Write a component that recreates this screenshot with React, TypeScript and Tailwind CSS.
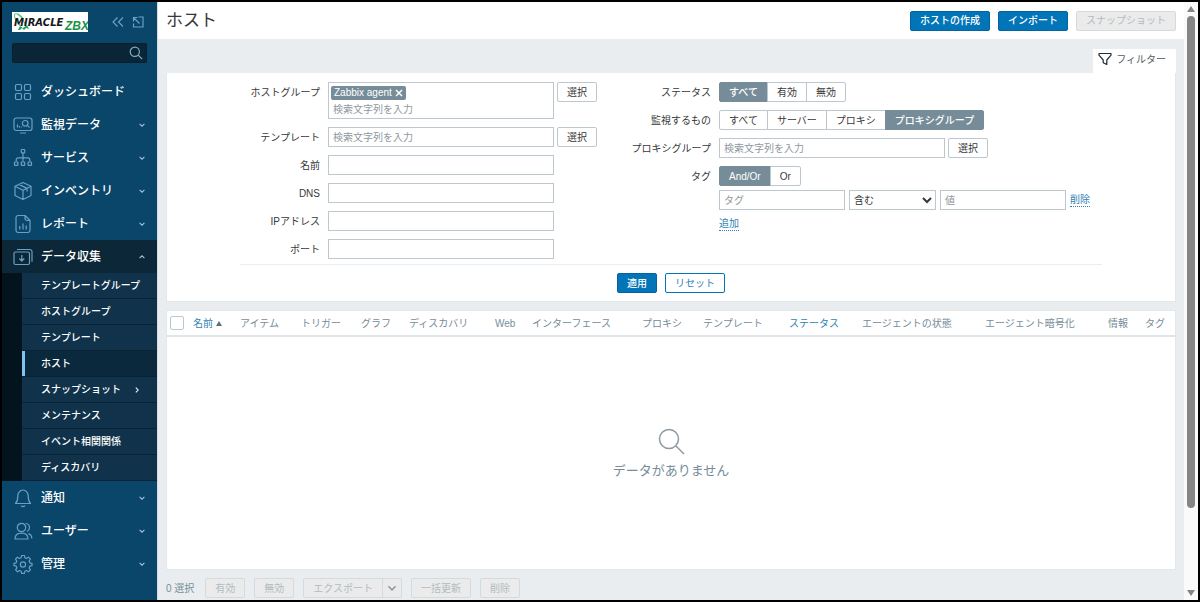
import { useState } from "react";
import type { ReactNode } from "react";
import clsx from "clsx";

interface MenuItem {
  label: string;
  icon: ReactNode;
  plain?: boolean;
}

const ICONS = {
  dashboard: (
    <>
      <rect x="2.5" y="2.5" width="6" height="6" rx="1.2" />
      <rect x="11.5" y="2.5" width="6" height="6" rx="1.2" />
      <rect x="2.5" y="11.5" width="6" height="6" rx="1.2" />
      <rect x="11.5" y="11.5" width="6" height="6" rx="1.2" />
    </>
  ),
  monitoring: (
    <>
      <rect x="1" y="3" width="18" height="12.5" rx="2.2" />
      <path d="M7 18h6M4.5 12.5v-3M6.5 12.5v-1.5M8.5 12.5v-.8" />
      <circle cx="12.2" cy="8.3" r="2.8" />
      <path d="m14.3 10.4 2.3 2.3" />
    </>
  ),
  services: (
    <>
      <rect x="8.3" y="1.5" width="3.4" height="3.4" rx=".6" />
      <path d="M10 5v8.5M3.2 13.5v-1.7a2 2 0 0 1 2-2h9.6a2 2 0 0 1 2 2v1.7" />
      <rect x="1.5" y="14" width="3.4" height="3.4" rx=".6" />
      <rect x="8.3" y="14" width="3.4" height="3.4" rx=".6" />
      <rect x="15.1" y="14" width="3.4" height="3.4" rx=".6" />
    </>
  ),
  inventory: (
    <>
      <path d="M10 1.5 18 5.3v9.2l-8 4-8-4V5.3zM2 5.3l8 4 8-4M10 9.3v9.2M6 3.4l8 4v3.2" />
    </>
  ),
  reports: (
    <>
      <path d="M12 1.5H5.2A2.2 2.2 0 0 0 3 3.7v12.6a2.2 2.2 0 0 0 2.2 2.2h9.6a2.2 2.2 0 0 0 2.2-2.2V6.5zM12 1.5v3a2 2 0 0 0 2 2h3" />
      <path d="M6.8 15.5V12M10 15.5v-6M13.2 15.5v-4" />
    </>
  ),
  collection: (
    <>
      <rect x="1" y="5" width="15.5" height="12.5" rx="1.5" />
      <path d="M4 2.5h12.8a2.2 2.2 0 0 1 2.2 2.2v10M8.8 8v6M6.3 11.5 8.8 14l2.5-2.5" />
    </>
  ),
  alerts: (
    <>
      <path d="M2.5 15.5c1.8-1.8 2.3-3.5 2.3-7.2C4.8 4.8 7 2 10 2s5.2 2.8 5.2 6.3c0 3.7.5 5.4 2.3 7.2zM8 17.8c1.2.9 2.8.9 4 0" />
    </>
  ),
  users: (
    <>
      <circle cx="8.5" cy="6.5" r="4.2" />
      <path d="M2 18c0-4 2.5-5.8 6.5-5.8S15 14 15 18zM12.5 2.5c2.5.3 4 1.9 4 4s-1 3.2-2.5 3.900M15.5 12.6c2 .7 3.300 2.400 3.300 5" />
    </>
  ),
  admin: (
    <>
      <path d="m8.6 1.5-.5 2.3-1.7.7-2-1.3-1.9 2 1.3 1.9-.7 1.7-2.1.5v2.4l2.2.5.7 1.7-1.3 2 1.9 1.9 2-1.3 1.6.7.5 2.2h2.8l.5-2.2 1.7-.7 1.9 1.3 1.9-1.9-1.3-2 .7-1.7 2.2-.5V9.3l-2.2-.5-.7-1.7 1.3-1.9-1.9-2-2 1.3-1.6-.7-.5-2.3z" />
      <circle cx="10" cy="10.5" r="2.6" />
    </>
  ),
};

const MENU_TOP: MenuItem[] = [
  { label: "ダッシュボード", icon: ICONS.dashboard, plain: true },
  { label: "監視データ", icon: ICONS.monitoring },
  { label: "サービス", icon: ICONS.services },
  { label: "インベントリ", icon: ICONS.inventory },
  { label: "レポート", icon: ICONS.reports },
];

const MENU_BOTTOM: MenuItem[] = [
  { label: "通知", icon: ICONS.alerts },
  { label: "ユーザー", icon: ICONS.users },
  { label: "管理", icon: ICONS.admin },
];

const SUBMENU = [
  "テンプレートグループ",
  "ホストグループ",
  "テンプレート",
  "ホスト",
  "スナップショット",
  "メンテナンス",
  "イベント相関関係",
  "ディスカバリ",
];

const COLUMNS = [
  { label: "アイテム", width: "w-[61px]" },
  { label: "トリガー", width: "w-[60px]" },
  { label: "グラフ", width: "w-12" },
  { label: "ディスカバリ", width: "w-[86px]" },
  { label: "Web", width: "w-[37px]" },
  { label: "インターフェース", width: "w-[110px]" },
  { label: "プロキシ", width: "w-[61px]" },
  { label: "テンプレート", width: "w-[86px]" },
  { label: "ステータス", width: "w-[73px]", sortable: true },
  { label: "エージェントの状態", width: "w-[123px]" },
  { label: "エージェント暗号化", width: "w-[123px]" },
  { label: "情報", width: "w-[37px]" },
  { label: "タグ", width: "w-[37px]" },
];

const FIELD = "h-5 border border-[#bcc8ce] bg-white px-1 text-[10px] text-[#1f2c33] outline-none placeholder:text-[#8f989d]";

function Chevron({ className, d = "m2 3.5 3 3 3-3" }: { className?: string; d?: string }) {
  return (
    <svg viewBox="0 0 10 10" className={className} fill="none" stroke="currentColor" strokeWidth="1.3" aria-hidden="true">
      <path d={d} />
    </svg>
  );
}

function MenuLink({ item, open }: { item: MenuItem; open?: boolean }) {
  return (
    <a
      href="#"
      className={clsx(
        "flex h-[33px] items-center px-[11px] text-xs font-medium text-white",
        open && "bg-[#0c2737]"
      )}
    >
      <svg viewBox="0 0 20 20" className="mr-2 size-5 shrink-0 text-[#6ba0c4]" fill="none" stroke="currentColor" strokeWidth="1.2" strokeLinejoin="round" aria-hidden="true">
        {item.icon}
      </svg>
      <span className="flex-1">{item.label}</span>
      {!item.plain && <Chevron className="size-2 text-[#a5c3d6]" d={open ? "m2 6.5 3-3 3 3" : undefined} />}
    </a>
  );
}

function Logo() {
  return (
    <svg viewBox="0 0 76 20" className="h-5 w-[76px] bg-white" role="img" aria-label="MIRACLE ZBX">
      <path d="M2.5 2c3-1 7 1 9 5M2.5 2c-.5 4 2 8 6 12M5 2c4 2 7 7 9 12" fill="none" stroke="#63c98b" strokeWidth="1.1" />
      <text x="2" y="14" fontSize="10" fontWeight="700" fontStyle="italic" fontFamily="DejaVu Sans" fill="#15191b">
        MIRACLE
      </text>
      <path d="m6 18 2-4 3 2 4-3 2 4-3-1-2 2-2-2-2 2z" fill="#27a25a" />
      <text x="53" y="18" fontSize="12" fontWeight="700" fontStyle="italic" fontFamily="Liberation Sans Narrow, Liberation Sans" fill="#159447">
        ZBX
      </text>
    </svg>
  );
}

function Sidebar() {
  return (
    <aside className="w-[155px] shrink-0 bg-[#0a466a]">
      <div className="flex items-center px-[10px] pt-[10px]">
        <Logo />
        <button type="button" aria-label="サイドバーを縮小" className="ml-auto text-[#6ba0c4]">
          <svg viewBox="0 0 12 12" className="size-3" fill="none" stroke="currentColor" strokeWidth="1.2">
            <path d="M5.5 1.500 1 6l4.500 4.500M11 1.500 6.500 6l4.500 4.500" />
          </svg>
        </button>
        <button type="button" aria-label="サイドバーを隠す" className="ml-2 mr-[3px] text-[#6ba0c4]">
          <svg viewBox="0 0 12 12" className="size-3" fill="none" stroke="currentColor" strokeWidth="1.2">
            <path d="M6.500 1H11v10H1.500V7.500M7.500 7.500l-6-6M1.500 5.500v-4h4" />
          </svg>
        </button>
      </div>
      <form className="mx-[10px] mb-2 mt-[11px] flex h-5 items-center rounded-xs border border-[#07202f] bg-[#0a2536] pr-[3px]">
        <input type="text" aria-label="検索" className="min-w-0 flex-1 bg-transparent px-1 text-[10px] text-white outline-none" />
        <button type="button" aria-label="検索する" className="text-[#82adc9]">
          <svg viewBox="0 0 14 14" className="size-[14px]" fill="none" stroke="currentColor" strokeWidth="1.2">
            <circle cx="5.8" cy="5.8" r="4.6" />
            <path d="m9.2 9.2 4 4" />
          </svg>
        </button>
      </form>
      <nav className="pt-1">
        {MENU_TOP.map((item) => (
          <MenuLink key={item.label} item={item} />
        ))}
        <MenuLink item={{ label: "データ収集", icon: ICONS.collection }} open />
        <ul className="border-l-20 border-[#03141e] bg-[#10334b]">
          {SUBMENU.map((label) => (
            <li key={label} className="border-b border-[#0a2436]">
              <a
                href="#"
                className={clsx(
                  "flex h-[25px] items-center border-l-3 px-4 text-[10px] font-medium text-white",
                  label === "ホスト" ? "border-[#7fc4f0] bg-[#0b293d]" : "border-transparent"
                )}
              >
                <span className="flex-1">{label}</span>
                {label === "スナップショット" && <Chevron className="size-2" d="m3.5 2 3 3-3 3" />}
              </a>
            </li>
          ))}
        </ul>
        {MENU_BOTTOM.map((item) => (
          <MenuLink key={item.label} item={item} />
        ))}
      </nav>
    </aside>
  );
}

function RadioGroup({ name, options, initial }: { name: string; options: string[]; initial: string }) {
  const [value, setValue] = useState(initial);

  return (
    <div role="radiogroup" aria-label={name} className="flex">
      {options.map((option) => (
        <label key={option} className="relative -mr-px block last:mr-0 first:[&>span]:rounded-l-xs last:[&>span]:rounded-r-xs">
          <input
            type="radio"
            name={name}
            checked={value === option}
            onChange={() => setValue(option)}
            className="peer sr-only"
          />
          <span className="flex h-5 items-center border border-[#bcc8ce] px-[9px] text-[#383838] peer-checked:border-[#768d99] peer-checked:bg-[#768d99] peer-checked:font-medium peer-checked:text-white">
            {option}
          </span>
        </label>
      ))}
    </div>
  );
}

function Row({ label, id, children }: { label: string; id?: string; children: ReactNode }) {
  return (
    <div className="flex gap-2">
      <label htmlFor={id} className="flex h-5 w-[90px] shrink-0 items-center justify-end whitespace-nowrap">
        {label}
      </label>
      <div className="flex min-w-0 gap-[3px]">{children}</div>
    </div>
  );
}

function SelectButton() {
  return (
    <button type="button" className="h-5 w-10 shrink-0 rounded-xs border border-[#bcc8ce] bg-white text-[#383838]">
      選択
    </button>
  );
}

function Filter() {
  const [agentGroup, setAgentGroup] = useState(true);

  return (
    <section>
      <div className="flex justify-end">
        <button type="button" className="flex h-6 items-center gap-1 bg-white pb-1 pl-[5px] pr-[10px] text-[10px] text-[#4f5c63]">
          <svg viewBox="0 0 14 14" className="size-[14px] text-[#1f2c33]" fill="none" stroke="currentColor" strokeWidth="1.2" strokeLinejoin="round">
            <path d="M1 1.500h12v1.700L8.800 8v4.500l-3.600-1.700V8L1 3.200z" />
          </svg>
          フィルター
        </button>
      </div>
      <form className="border border-t-0 border-[#e3e8eb] bg-white pb-2 pt-[9px]">
        <div className="mx-auto max-w-[862px]">
          <div className="flex gap-6 border-b border-[#eceff1] pb-[5px]">
            <div className="-ml-[10px] flex flex-col gap-2">
              <Row label="ホストグループ" id="groups">
                <div className="w-[226px] border border-[#bcc8ce] px-[2px] pt-[2px]">
                  {agentGroup && (
                    <span className="inline-flex h-[14px] items-center gap-[3px] rounded-xs bg-[#768d99] px-[3px] text-white">
                      Zabbix agent
                      <button type="button" aria-label="Zabbix agent を削除" onClick={() => setAgentGroup(false)}>
                        <svg viewBox="0 0 8 8" className="size-2" stroke="currentColor" strokeWidth="1.5">
                          <path d="m1 1 6 6M7 1 1 7" />
                        </svg>
                      </button>
                    </span>
                  )}
                  <input id="groups" type="text" placeholder="検索文字列を入力" className="block h-[18px] w-full px-[2px] outline-none placeholder:text-[#8f989d]" />
                </div>
                <SelectButton />
              </Row>
              <Row label="テンプレート" id="templates">
                <input id="templates" type="text" placeholder="検索文字列を入力" className={clsx(FIELD, "w-[226px]")} />
                <SelectButton />
              </Row>
              {["名前", "DNS", "IPアドレス", "ポート"].map((label) => (
                <Row key={label} label={label} id={label}>
                  <input id={label} type="text" className={clsx(FIELD, "w-[226px]")} />
                </Row>
              ))}
            </div>
            <div className="flex flex-col gap-2">
              <Row label="ステータス">
                <RadioGroup name="ステータス" options={["すべて", "有効", "無効"]} initial="すべて" />
              </Row>
              <Row label="監視するもの">
                <RadioGroup name="監視するもの" options={["すべて", "サーバー", "プロキシ", "プロキシグループ"]} initial="プロキシグループ" />
              </Row>
              <Row label="プロキシグループ" id="proxy">
                <input id="proxy" type="text" placeholder="検索文字列を入力" className={clsx(FIELD, "w-[226px]")} />
                <SelectButton />
              </Row>
              <Row label="タグ">
                <div className="flex flex-col items-start gap-1">
                  <RadioGroup name="タグ" options={["And/Or", "Or"]} initial="And/Or" />
                  <div className="flex items-center gap-1">
                    <input type="text" aria-label="タグ" placeholder="タグ" className={clsx(FIELD, "w-[126px]")} />
                    <select aria-label="演算子" defaultValue="含む" className="h-5 w-[87px] border border-[#bcc8ce] bg-white text-[10px] text-[#383838]">
                      <option>含む</option>
                      <option>等しい</option>
                      <option>含まない</option>
                    </select>
                    <input type="text" aria-label="値" placeholder="値" className={clsx(FIELD, "w-[126px]")} />
                    <a href="#" className="border-b border-dotted border-[#2f7fb5] leading-3 text-[#2f7fb5]">
                      削除
                    </a>
                  </div>
                  <a href="#" className="mt-1 border-b border-dotted border-[#2f7fb5] leading-3 text-[#2f7fb5]">
                    追加
                  </a>
                </div>
              </Row>
            </div>
          </div>
          <div className="flex justify-center gap-2 pt-2">
            <button type="submit" className="h-5 rounded-xs border border-[#02659f] bg-[#0275b8] px-[9px] font-medium text-white">
              適用
            </button>
            <button type="reset" className="h-5 rounded-xs border border-[#0275b8] bg-white px-[9px] text-[#2f7fb5]">
              リセット
            </button>
          </div>
        </div>
      </form>
    </section>
  );
}

function HostTable() {
  return (
    <section className="mt-2 flex flex-1 flex-col border border-[#e3e8eb] bg-white">
      <table className="w-full table-fixed border-b-2 border-[#dfe5e9] text-left">
        <thead>
          <tr className="h-[25px] whitespace-nowrap text-[10px] text-[#768d99]">
            <th className="w-5 pl-[3px]">
              <input type="checkbox" aria-label="すべて選択" className="block size-[14px] appearance-none rounded-xs border border-[#bcc8ce] bg-white checked:bg-[#0275b8]" />
            </th>
            <th className="w-[47px] pl-[6px] font-normal">
              <a href="#" className="text-[#2f7fb5]">
                名前
                <svg viewBox="0 0 6 5" className="ml-[3px] inline h-[5px] w-[6px]">
                  <path d="M3 0 6 5H0z" fill="#5b6f79" />
                </svg>
              </a>
            </th>
            {COLUMNS.map((col) => (
              <th key={col.label} className={clsx("pl-[6px] font-normal", col.width)}>
                {col.sortable ? <a href="#" className="text-[#2f7fb5]">{col.label}</a> : col.label}
              </th>
            ))}
          </tr>
        </thead>
      </table>
      <div className="flex flex-1 flex-col items-center justify-center gap-2 text-[13px] text-[#768d99]">
        <svg viewBox="0 0 28 28" className="size-7" fill="none" stroke="#8b9aa3" strokeWidth="1.5">
          <circle cx="12" cy="12" r="9.5" />
          <path d="m19 19 8 8" />
        </svg>
        <p className="leading-4">データがありません</p>
      </div>
    </section>
  );
}

function FooterActions() {
  const button = "h-5 rounded-xs border border-[#d3dbdf] bg-[#ebebeb] px-[9px] text-[#b1bbc0]";

  return (
    <footer className="flex items-center gap-[9px] pb-[2px] pt-2">
      <span className="mr-[2px] text-[#768d99]">0 選択</span>
      <button type="button" disabled className={button}>有効</button>
      <button type="button" disabled className={button}>無効</button>
      <div className="flex">
        <button type="button" disabled className={clsx(button, "rounded-r-none")}>エクスポート</button>
        <button type="button" disabled aria-label="エクスポート形式" className="-ml-px h-5 w-5 rounded-r-xs border border-[#d3dbdf] bg-[#ebebeb] text-[#8b9aa3]">
          <Chevron className="mx-auto size-3" />
        </button>
      </div>
      <button type="button" disabled className={button}>一括更新</button>
      <button type="button" disabled className={button}>削除</button>
    </footer>
  );
}

function ScrollRail() {
  return (
    <div className="flex w-[14px] shrink-0 flex-col items-center bg-[#fafafa] py-1 text-[#858585]" aria-hidden="true">
      <svg viewBox="0 0 8 6" className="h-[6px] w-2" fill="currentColor">
        <path d="M4 0 8 6H0z" />
      </svg>
      <div className="mt-1 w-2 grow-6 rounded-full bg-[#858585]" />
      <div className="grow" />
      <svg viewBox="0 0 8 6" className="h-[6px] w-2" fill="currentColor">
        <path d="M4 6 8 0H0z" />
      </svg>
    </div>
  );
}

export default function App() {
  return (
    <div className="flex min-h-screen border-2 border-black bg-white font-['Liberation_Sans','Noto_Sans_CJK_JP',sans-serif] text-[10px] text-[#383838]">
      <Sidebar />
      <main className="flex min-w-0 flex-1 flex-col border-l border-[#d5dde2] bg-[#e9edf0]">
        <header className="flex h-[37px] items-center gap-2 bg-white px-2">
          <h1 className="mr-auto text-[17px] text-[#383838]">ホスト</h1>
          <button type="button" className="h-5 rounded-xs border border-[#02659f] bg-[#0275b8] px-[9px] font-medium text-white">
            ホストの作成
          </button>
          <button type="button" className="h-5 rounded-xs border border-[#02659f] bg-[#0275b8] px-[9px] font-medium text-white">
            インポート
          </button>
          <button type="button" disabled className="h-5 rounded-xs border border-[#d3dbdf] bg-[#ebebeb] px-[9px] text-[#b1bbc0]">
            スナップショット
          </button>
        </header>
        <div className="flex flex-1 flex-col px-2 pt-[10px]">
          <Filter />
          <HostTable />
          <FooterActions />
        </div>
      </main>
      <ScrollRail />
    </div>
  );
}
